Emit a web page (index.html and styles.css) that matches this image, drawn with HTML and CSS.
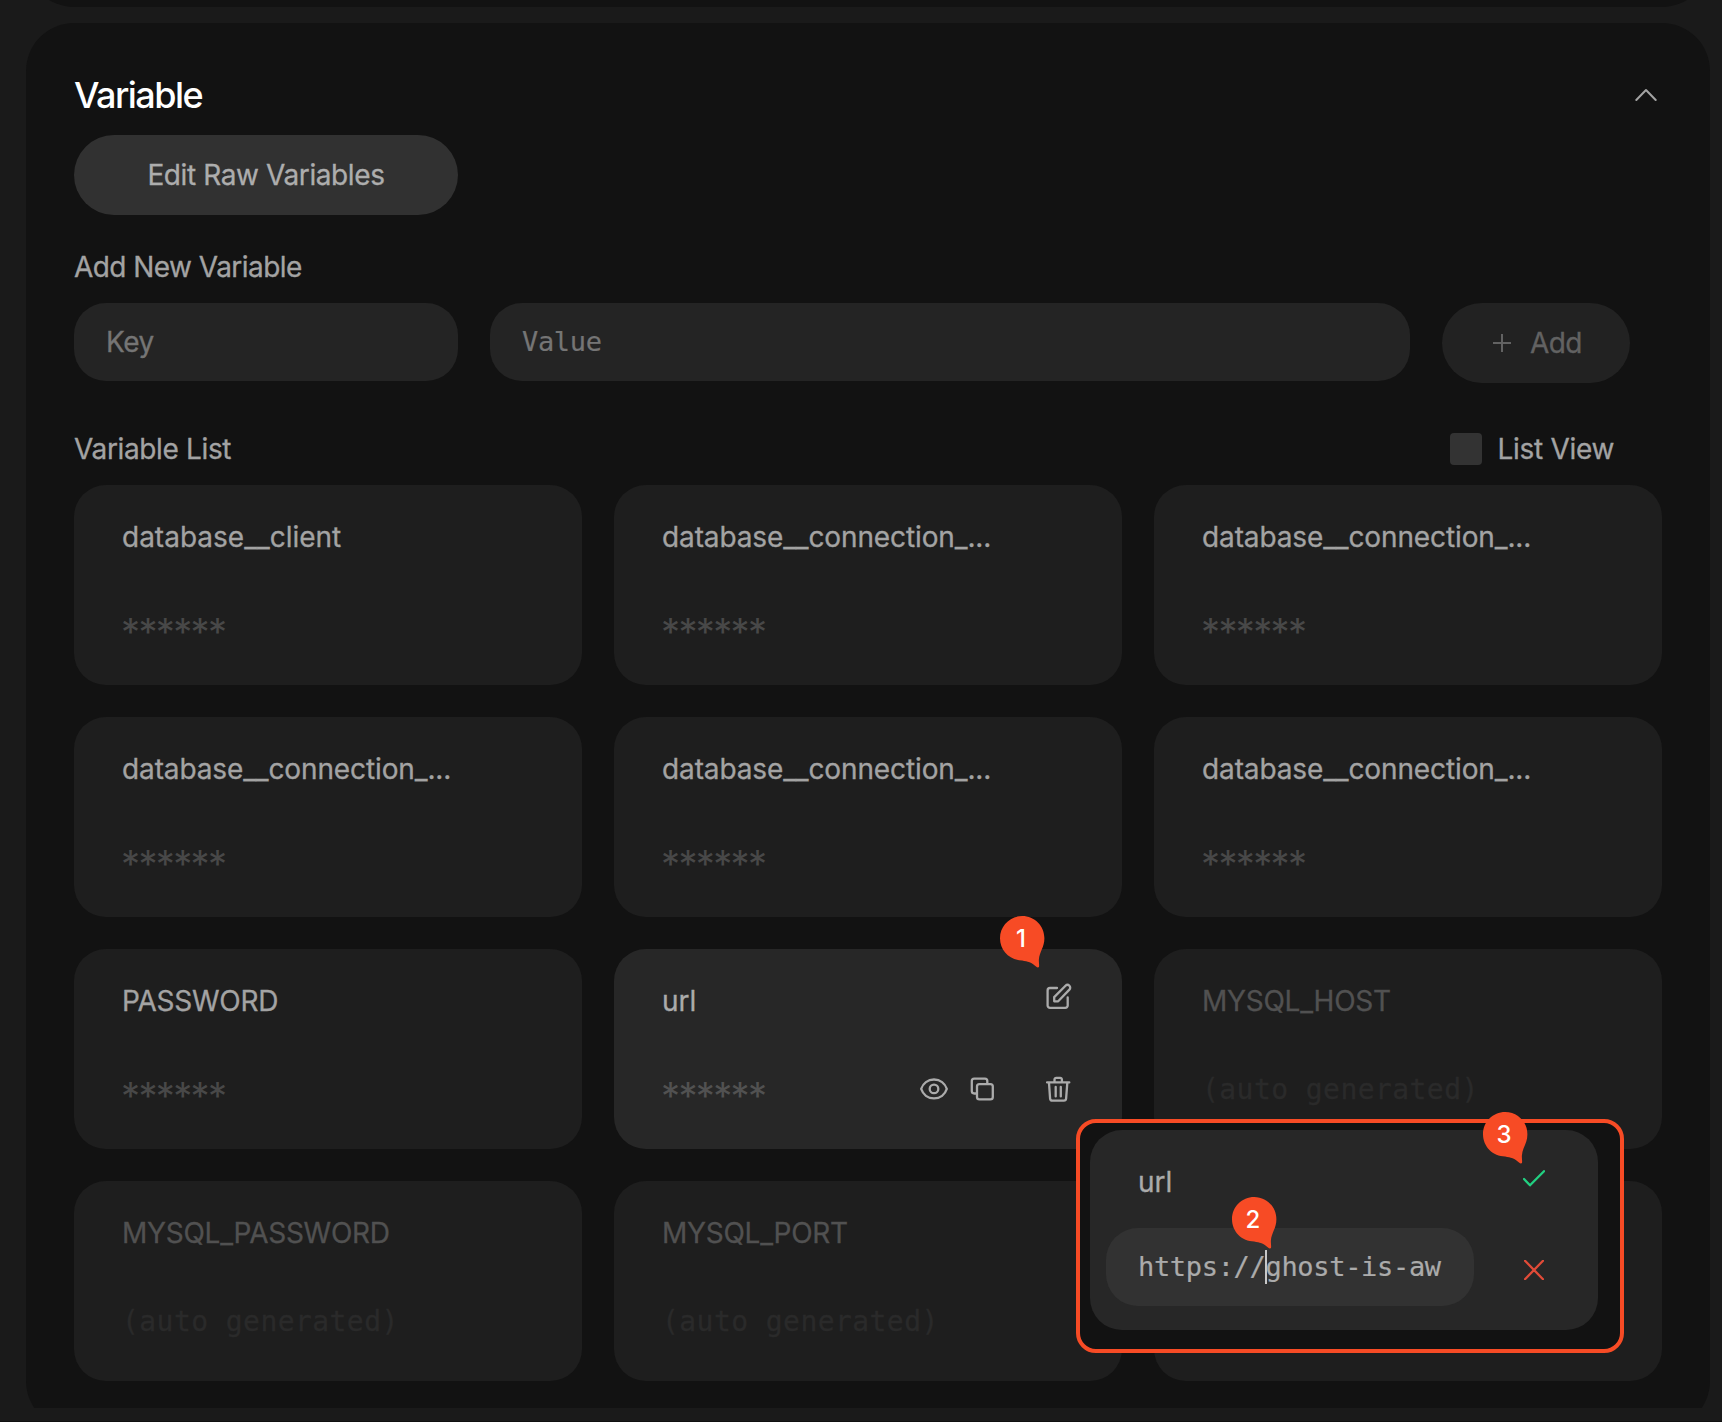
FILE: index.html
```html
<!DOCTYPE html>
<html lang="en">
<head>
<meta charset="utf-8">
<title>Variable</title>
<link rel="stylesheet" href="styles.css">
</head>
<body>
<main class="page">
  <section class="panel panel-previous"></section>
  <section class="panel">
    <header class="panel-header">
      <h1 class="title">Variable</h1>
      <svg class="chevron" width="22" height="14" viewBox="0 0 22 14"><path d="M1.3 12 11 2l9.700 10"/></svg>
    </header>
    <button class="button raw">Edit Raw Variables</button>

    <h2 class="label add-label">Add New Variable</h2>
    <div class="add-row">
      <div class="input">Key</div>
      <div class="input mono">Value</div>
      <button class="button add"><svg width="18" height="18" viewBox="0 0 18 18"><path d="M9 0v18M0 9h18"/></svg>Add</button>
    </div>

    <div class="list-header">
      <h2 class="label">Variable List</h2>
      <label class="toggle"><span class="checkbox"></span>List View</label>
    </div>

    <div class="grid">
      <article class="card"><div class="name">database__client</div><div class="secret">******</div></article>
      <article class="card"><div class="name long">database__connection_...</div><div class="secret">******</div></article>
      <article class="card"><div class="name long">database__connection_...</div><div class="secret">******</div></article>
      <article class="card"><div class="name long">database__connection_...</div><div class="secret">******</div></article>
      <article class="card"><div class="name long">database__connection_...</div><div class="secret">******</div></article>
      <article class="card"><div class="name long">database__connection_...</div><div class="secret">******</div></article>
      <article class="card"><div class="name caps">PASSWORD</div><div class="secret">******</div></article>
      <article class="card active">
        <div class="row">
          <div class="name">url</div>
          <svg class="icon edit" width="28" height="28" viewBox="2 0 28 28"><path d="M13 6H6a2.400 2.400 0 0 0-2.400 2.400v15A2.400 2.400 0 0 0 6 25.800h15.300a2.400 2.400 0 0 0 2.400-2.400V15.500"/><path d="M10.200 19.300v-4.200L21.500 3.700a2.700 2.700 0 0 1 3.900 3.900L14.200 19.300z"/></svg>
        </div>
        <div class="row">
          <div class="secret">******</div>
          <div class="actions">
            <svg class="icon" width="28" height="28" viewBox="0 0 28 28"><path d="M1.200 13.900C3 8.300 7.800 4.500 14 4.500s11 3.800 12.800 9.400C25 19.500 20.200 23.400 14 23.400S3 19.500 1.200 13.900z"/><circle cx="14" cy="13.900" r="4.300"/></svg>
            <svg class="icon" width="28" height="28" viewBox="0 0 28 28"><path d="M8.300 18.500H6.200a2.400 2.400 0 0 1-2.400-2.400V6.100a2.400 2.400 0 0 1 2.400-2.400h10.700a2.400 2.400 0 0 1 2.400 2.400v2.600"/><rect x="9" y="9.200" width="15.800" height="15.200" rx="2.400"/></svg>
            <svg class="icon trash" width="28" height="28" viewBox="0 0 28 28"><path d="M1 7.400h22.300M8.500 7V4.600a1.700 1.700 0 0 1 1.700-1.700h4a1.700 1.700 0 0 1 1.700 1.700V7M3 7.800l1.100 15.900a2.200 2.200 0 0 0 2.200 2h11.600a2.200 2.200 0 0 0 2.200-2l1.200-15.900M9.700 12v9.400M14.800 12v9.400"/></svg>
          </div>
        </div>
      </article>
      <article class="card locked"><div class="name caps">MYSQL_HOST</div><div class="auto">(auto generated)</div></article>
      <article class="card locked"><div class="name caps">MYSQL_PASSWORD</div><div class="auto">(auto generated)</div></article>
      <article class="card locked"><div class="name caps">MYSQL_PORT</div><div class="auto">(auto generated)</div></article>
      <article class="card locked"></article>
    </div>
  </section>
</main>

<div class="callout">
  <div class="editor">
    <div class="editor-row">
      <div class="name">url</div>
      <svg class="check" width="22" height="17" viewBox="0 0 22 17"><path d="M1 9l6 6.300L21 1.200"/></svg>
    </div>
    <div class="editor-row">
      <div class="input mono field">https://<span class="caret"></span>ghost-is-aw</div>
      <svg class="cross" width="20" height="20" viewBox="0 0 20 20"><path d="M1 .8l18 18.400M19 .8L1 19.200"/></svg>
    </div>
  </div>
</div>

<div class="pin pin-one"><svg width="45" height="52" viewBox="0 0 45 52"><path d="M22.200 0C34.500 0 44.400 9.900 44.400 22.200c0 9.200-4.900 13.400-5.500 21.200-.2 3 .5 5 .1 7.400-.6 1.400-2 .6-3-.3C32 46.300 27.500 45.400 22.200 44.400 9.900 44.400 0 34.500 0 22.200S9.900 0 22.200 0z"/></svg><span>1</span></div>
<div class="pin pin-two"><svg width="45" height="52" viewBox="0 0 45 52"><path d="M22.200 0C34.500 0 44.400 9.900 44.400 22.200c0 9.200-4.900 13.400-5.500 21.200-.2 3 .5 5 .1 7.400-.6 1.400-2 .6-3-.3C32 46.300 27.500 45.400 22.200 44.400 9.900 44.400 0 34.500 0 22.200S9.900 0 22.200 0z"/></svg><span>2</span></div>
<div class="pin pin-three"><svg width="45" height="52" viewBox="0 0 45 52"><path d="M22.200 0C34.500 0 44.400 9.900 44.400 22.200c0 9.200-4.900 13.400-5.500 21.200-.2 3 .5 5 .1 7.400-.6 1.400-2 .6-3-.3C32 46.300 27.500 45.400 22.200 44.400 9.900 44.400 0 34.500 0 22.200S9.900 0 22.200 0z"/></svg><span>3</span></div>
</body>
</html>
```
FILE: styles.css
```css
* { box-sizing: border-box; }

body {
  position: relative;
  margin: 0;
  height: 1422px;
  border-bottom: 1px solid #101010;
  background: #1a1a1a;
  color: #a3a3a3;
  font-family: Inter, sans-serif;
  font-size: 28px;
  line-height: 40px;
  -webkit-text-stroke: 0.3px;
  overflow: hidden;
}

svg { display: block; flex: none; fill: none; stroke: currentColor; stroke-width: 2; stroke-linecap: round; stroke-linejoin: round; }

.page {
  display: flex;
  flex-direction: column;
  gap: 16px;
  height: 1408px;
  padding: 0 12px 0 26px;
  overflow: hidden;
}

.panel { flex: none; padding: 48px; border-radius: 48px; background: #121212; }
.panel-previous { height: 100px; margin-top: -93px; }

.panel-header { display: flex; align-items: center; justify-content: space-between; height: 48px; }
.title { margin: 0; color: #fff; font-size: 36px; font-weight: 500; letter-spacing: -1.55px; -webkit-text-stroke: 0; }
.chevron { margin: 0 5px 1px 0; }

.button {
  display: flex;
  align-items: center;
  justify-content: center;
  height: 80px;
  padding: 0;
  border: 0;
  border-radius: 40px;
  font: inherit;
}
.raw { width: 384px; margin-top: 16px; background: #313131; color: #adadad; letter-spacing: -0.4px; }

.label { margin: 0; font-size: 28px; font-weight: 400; letter-spacing: -0.36px; }
.add-label { margin: 32px 0 16px; letter-spacing: -0.55px; }

.add-row { display: grid; grid-template-columns: 384px 920px 188px; gap: 32px; }
.input {
  height: 78px;
  padding: 19px 32px;
  border-radius: 32px;
  background: #242424;
  color: #757575;
  letter-spacing: -0.5px;
  white-space: nowrap;
}
.mono { font-family: "DejaVu Sans Mono", monospace; font-size: 27px; letter-spacing: -0.32px; -webkit-text-stroke: 0.2px; }
.add { gap: 19px; padding-left: 3px; background: #222; color: #626262; letter-spacing: -0.6px; }

.list-header { display: flex; align-items: center; justify-content: space-between; height: 40px; margin: 46px 48px 16px 0; }
.toggle { display: flex; align-items: center; gap: 16px; letter-spacing: -0.32px; }
.checkbox { width: 32px; height: 32px; border-radius: 4px; background: #333; }

.grid { display: grid; grid-template-columns: repeat(3, 508px); gap: 32px; }
.card {
  display: flex;
  flex-direction: column;
  gap: 50px;
  height: 200px;
  padding: 32px 48px;
  border-radius: 32px;
  background: #1e1e1e;
}
.active { background: #272727; color: #ababab; }
.active .secret { color: #515151; }
.locked { color: #515151; }
.long { letter-spacing: -0.12px; }
.caps { letter-spacing: -0.27px; }

.secret {
  height: 40px;
  margin-left: -1px;
  padding-top: 5px;
  color: #484848;
  font-size: 38px;
  line-height: 40px;
  letter-spacing: -1.65px;
  -webkit-text-stroke: 0;
}
.auto { margin-top: -1px; color: #2a2a2a; font-family: "DejaVu Sans Mono", monospace; font-size: 28px; letter-spacing: 0.44px; }

.row { display: flex; justify-content: space-between; height: 40px; }
.icon { margin-top: 4px; stroke-width: 2.3; }
.edit { margin-top: 1px; }
.actions { display: flex; gap: 20px; }
.trash { margin-left: 30px; }

/* Enlarged editing state laid over the grid */
.callout {
  position: absolute;
  left: 1076px;
  top: 1119px;
  width: 548px;
  height: 234px;
  padding: 7px 10px;
  border: 4px solid #f74b25;
  border-radius: 20px;
  background: #121212;
}
.editor { width: 508px; height: 200px; padding: 32px 52px 24px 16px; border-radius: 32px; background: #272727; color: #ababab; }
.editor-row { display: flex; justify-content: space-between; }
.editor-row .name { margin: 0 0 26px 32px; }
.field { width: 368px; background: #323232; color: #ababab; }
.caret { display: inline-block; width: 2px; height: 34px; margin: 0 -2px 0 0; background: #c8c8c8; vertical-align: -8px; }
.check { margin: 8px 1px 0 0; color: #22d081; stroke-width: 2.3; }
.cross { margin: 32px 2px 0 0; color: #e14b38; stroke-width: 2.3; }

.pin { position: absolute; width: 45px; height: 52px; }
.pin svg { fill: #f74b25; stroke: none; }
.pin span { position: absolute; inset: 0 3px auto 0; color: #fff; font-size: 24px; font-weight: 500; line-height: 46px; text-align: center; -webkit-text-stroke: 0; }
.pin-one { left: 1000px; top: 916px; }
.pin-two { left: 1232px; top: 1197px; }
.pin-three { left: 1483px; top: 1112px; }
```
